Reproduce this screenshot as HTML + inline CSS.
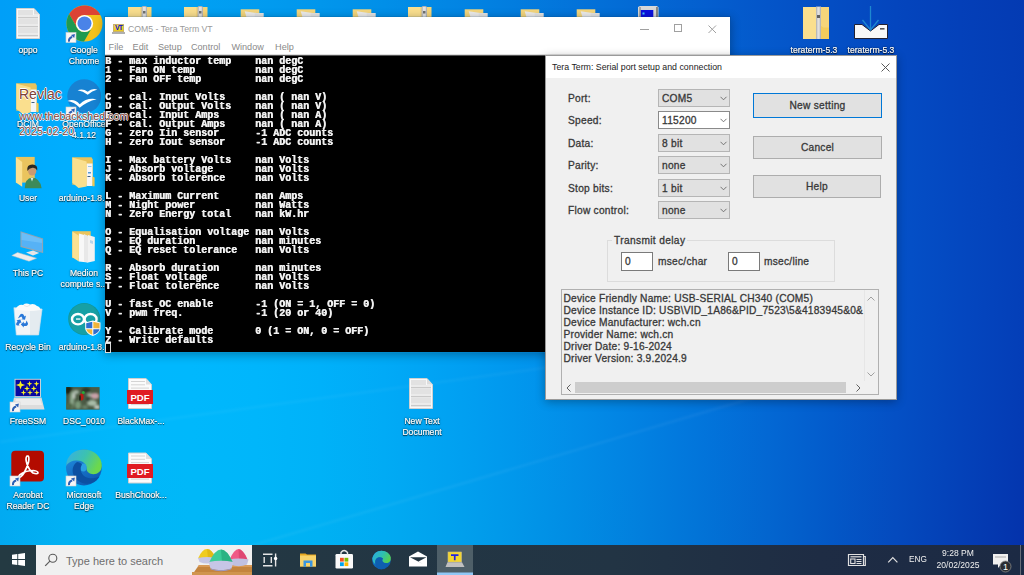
<!DOCTYPE html><html><head><meta charset="utf-8"><style>
*{margin:0;padding:0;box-sizing:border-box}
html,body{width:1024px;height:575px;overflow:hidden;background:#0290e8;font-family:"Liberation Sans",sans-serif}
.abs{position:absolute}
.bgrow{position:absolute;left:0;width:1024px}
.lbl{position:absolute;color:#fff;font-size:9.6px;line-height:11px;text-align:center;white-space:pre;transform:scaleX(.895);-webkit-text-stroke:0.2px #fff;text-shadow:0 0 2px rgba(0,0,0,.85),0 1px 1px rgba(0,0,0,.7)}
 .term{font-family:"Liberation Mono",monospace;font-weight:bold;font-size:11px;line-height:9px;transform:scaleX(.9091);transform-origin:0 0;color:#f0f0f0;white-space:pre;text-shadow:0.6px 0 0 #f0f0f0}
.dlg{font-size:10.2px;letter-spacing:.25px;color:#383838;-webkit-text-stroke:.3px #383838}
.combo{position:absolute;left:112px;width:72px;height:18px;border:1px solid #b5b5b5;background:#e1e1e1;padding-left:3px;line-height:16px}
.combo.w{background:#fff;border-color:#8a8a8a}
.chev{position:absolute;right:3px;top:5px;width:7px;height:5px}
.btn{position:absolute;left:207px;width:129px;border:1px solid #adadad;background:#e1e1e1;text-align:center}
</style></head><body>
<div class="bgrow" style="top:0px;height:10px;background:linear-gradient(to right,#009ef7 0px,#00a2f6 64px,#00a2f5 128px,#00a0f3 192px,#019cf0 256px,#0196ec 320px,#018fe8 384px,#0286e4 448px,#027ddf 512px,#0373da 576px,#0369d4 640px,#045fcf 704px,#0455c9 768px,#044dc3 832px,#0445bd 896px,#043fb8 960px,#043ab2 1024px)"></div>
<div class="bgrow" style="top:10px;height:10px;background:linear-gradient(to right,#009ff8 0px,#00a3f7 64px,#00a3f6 128px,#00a1f3 192px,#019df1 256px,#0198ed 320px,#0190e9 384px,#0288e5 448px,#027ee0 512px,#0374db 576px,#036ad5 640px,#0360cf 704px,#0456ca 768px,#044ec4 832px,#0446be 896px,#043fb8 960px,#043bb3 1024px)"></div>
<div class="bgrow" style="top:20px;height:10px;background:linear-gradient(to right,#00a0f8 0px,#00a4f8 64px,#00a4f6 128px,#00a3f4 192px,#019ff1 256px,#0199ee 320px,#0191ea 384px,#0289e6 448px,#027fe1 512px,#0375db 576px,#036bd6 640px,#0361d0 704px,#0457ca 768px,#044ec5 832px,#0446bf 896px,#0440b9 960px,#043bb3 1024px)"></div>
<div class="bgrow" style="top:30px;height:10px;background:linear-gradient(to right,#00a1f9 0px,#00a4f8 64px,#00a5f7 128px,#00a4f5 192px,#01a0f2 256px,#019aef 320px,#0193eb 384px,#028ae6 448px,#0281e2 512px,#0377dc 576px,#036cd7 640px,#0362d1 704px,#0458cb 768px,#044fc5 832px,#0447bf 896px,#0441ba 960px,#043cb4 1024px)"></div>
<div class="bgrow" style="top:40px;height:10px;background:linear-gradient(to right,#00a2f9 0px,#00a5f9 64px,#00a6f8 128px,#00a5f6 192px,#01a1f3 256px,#019bf0 320px,#0194ec 384px,#028be7 448px,#0282e2 512px,#0378dd 576px,#036dd8 640px,#0363d2 704px,#0459cc 768px,#0450c6 832px,#0448c0 896px,#0441ba 960px,#043cb4 1024px)"></div>
<div class="bgrow" style="top:50px;height:10px;background:linear-gradient(to right,#00a2fa 0px,#00a6fa 64px,#00a7f8 128px,#00a6f6 192px,#01a2f4 256px,#019cf0 320px,#0195ec 384px,#028ce8 448px,#0283e3 512px,#0379de 576px,#036ed8 640px,#0364d3 704px,#045acd 768px,#0451c7 832px,#0449c1 896px,#0442bb 960px,#043db5 1024px)"></div>
<div class="bgrow" style="top:60px;height:10px;background:linear-gradient(to right,#00a3fa 0px,#00a7fa 64px,#00a8f9 128px,#00a7f7 192px,#01a3f4 256px,#019df1 320px,#0196ed 384px,#028de9 448px,#0284e4 512px,#037adf 576px,#036fd9 640px,#0365d4 704px,#045bce 768px,#0452c8 832px,#0449c1 896px,#0442bb 960px,#043db5 1024px)"></div>
<div class="bgrow" style="top:70px;height:10px;background:linear-gradient(to right,#00a4fb 0px,#00a8fb 64px,#00a9fa 128px,#00a8f8 192px,#01a4f5 256px,#019ef2 320px,#0197ee 384px,#028eea 448px,#0285e5 512px,#027be0 576px,#0370da 640px,#0366d4 704px,#045cce 768px,#0452c8 832px,#044ac2 896px,#0443bc 960px,#043db6 1024px)"></div>
<div class="bgrow" style="top:80px;height:10px;background:linear-gradient(to right,#00a5fb 0px,#00a9fb 64px,#00aafa 128px,#00a9f8 192px,#01a5f6 256px,#019ff3 320px,#0198ef 384px,#028fea 448px,#0286e6 512px,#027ce0 576px,#0371db 640px,#0367d5 704px,#045dcf 768px,#0453c9 832px,#044bc3 896px,#0443bc 960px,#043eb6 1024px)"></div>
<div class="bgrow" style="top:90px;height:10px;background:linear-gradient(to right,#00a5fc 0px,#00aafc 64px,#00abfb 128px,#00aaf9 192px,#01a6f6 256px,#01a0f3 320px,#0199ef 384px,#0290eb 448px,#0287e6 512px,#027de1 576px,#0372db 640px,#0368d6 704px,#035dd0 768px,#0454c9 832px,#044bc3 896px,#0444bd 960px,#043eb7 1024px)"></div>
<div class="bgrow" style="top:100px;height:10px;background:linear-gradient(to right,#00a6fc 0px,#00aafc 64px,#00acfb 128px,#00aafa 192px,#00a7f7 256px,#01a1f4 320px,#019af0 384px,#0291ec 448px,#0288e7 512px,#027ee2 576px,#0373dc 640px,#0368d6 704px,#035ed0 768px,#0454ca 832px,#044cc4 896px,#0444bd 960px,#043eb7 1024px)"></div>
<div class="bgrow" style="top:110px;height:10px;background:linear-gradient(to right,#00a7fc 0px,#00abfc 64px,#00adfc 128px,#00abfa 192px,#00a8f8 256px,#01a2f5 320px,#019bf1 384px,#0292ec 448px,#0289e8 512px,#027fe2 576px,#0374dd 640px,#0369d7 704px,#035fd1 768px,#0455ca 832px,#044cc4 896px,#0445be 960px,#043fb7 1024px)"></div>
<div class="bgrow" style="top:120px;height:10px;background:linear-gradient(to right,#00a7fd 0px,#00acfd 64px,#00adfc 128px,#00acfb 192px,#00a9f8 256px,#01a3f5 320px,#019cf1 384px,#0193ed 448px,#028ae8 512px,#027fe3 576px,#0375dd 640px,#036ad7 704px,#0360d1 768px,#0456cb 832px,#044dc5 896px,#0445be 960px,#043fb8 1024px)"></div>
<div class="bgrow" style="top:130px;height:10px;background:linear-gradient(to right,#00a8fd 0px,#00acfd 64px,#00aefd 128px,#00adfb 192px,#00a9f9 256px,#01a4f6 320px,#019df2 384px,#0194ee 448px,#028be9 512px,#0280e4 576px,#0376de 640px,#036bd8 704px,#0360d2 768px,#0456cb 832px,#044dc5 896px,#0445be 960px,#043fb8 1024px)"></div>
<div class="bgrow" style="top:140px;height:10px;background:linear-gradient(to right,#00a8fd 0px,#00adfe 64px,#00affd 128px,#00aefb 192px,#00aaf9 256px,#01a5f6 320px,#019ef2 384px,#0195ee 448px,#028be9 512px,#0281e4 576px,#0376de 640px,#036bd9 704px,#0361d2 768px,#0457cc 832px,#044ec5 896px,#0446bf 960px,#043fb8 1024px)"></div>
<div class="bgrow" style="top:150px;height:10px;background:linear-gradient(to right,#00a9fd 0px,#00aefe 64px,#00affd 128px,#00aefc 192px,#00abfa 256px,#01a6f7 320px,#019ef3 384px,#0196ef 448px,#028cea 512px,#0282e5 576px,#0377df 640px,#036cd9 704px,#0362d3 768px,#0457cc 832px,#044ec6 896px,#0446bf 960px,#0440b8 1024px)"></div>
<div class="bgrow" style="top:160px;height:10px;background:linear-gradient(to right,#00a9fe 0px,#00aefe 64px,#00b0fe 128px,#00affc 192px,#00acfa 256px,#01a6f7 320px,#019ff3 384px,#0197ef 448px,#028dea 512px,#0283e5 576px,#0378e0 640px,#036dd9 704px,#0362d3 768px,#0458cd 832px,#044fc6 896px,#0446bf 960px,#0440b9 1024px)"></div>
<div class="bgrow" style="top:170px;height:10px;background:linear-gradient(to right,#00aafe 0px,#00affe 64px,#00b1fe 128px,#00b0fd 192px,#00adfa 256px,#01a7f8 320px,#01a0f4 384px,#0198f0 448px,#028eeb 512px,#0283e6 576px,#0379e0 640px,#036dda 704px,#0363d4 768px,#0458cd 832px,#044fc6 896px,#0447c0 960px,#0440b9 1024px)"></div>
<div class="bgrow" style="top:180px;height:10px;background:linear-gradient(to right,#00aafe 0px,#00affe 64px,#00b1fe 128px,#00b1fd 192px,#00adfb 256px,#01a8f8 320px,#01a1f4 384px,#0198f0 448px,#028feb 512px,#0284e6 576px,#0379e0 640px,#036eda 704px,#0363d4 768px,#0459cd 832px,#044fc7 896px,#0447c0 960px,#0440b9 1024px)"></div>
<div class="bgrow" style="top:190px;height:10px;background:linear-gradient(to right,#00abfe 0px,#00b0ff 64px,#00b2fe 128px,#00b1fd 192px,#00aefb 256px,#01a9f8 320px,#01a2f5 384px,#0199f1 448px,#028fec 512px,#0285e7 576px,#027ae1 640px,#036fdb 704px,#0364d4 768px,#0459ce 832px,#0450c7 896px,#0447c0 960px,#0440b9 1024px)"></div>
<div class="bgrow" style="top:200px;height:10px;background:linear-gradient(to right,#00abfe 0px,#00b0ff 64px,#00b2ff 128px,#00b2fd 192px,#00affb 256px,#01a9f9 320px,#01a2f5 384px,#019af1 448px,#0290ec 512px,#0285e7 576px,#027ae1 640px,#036fdb 704px,#0364d5 768px,#045ace 832px,#0450c7 896px,#0447c0 960px,#0440b9 1024px)"></div>
<div class="bgrow" style="top:210px;height:10px;background:linear-gradient(to right,#00acfe 0px,#00b1ff 64px,#00b3ff 128px,#00b2fe 192px,#00affc 256px,#01aaf9 320px,#01a3f5 384px,#019af1 448px,#0291ed 512px,#0286e7 576px,#027be2 640px,#0370db 704px,#0365d5 768px,#035ace 832px,#0450c7 896px,#0447c0 960px,#0440b9 1024px)"></div>
<div class="bgrow" style="top:220px;height:10px;background:linear-gradient(to right,#00acfe 0px,#00b1ff 64px,#00b4ff 128px,#00b3fe 192px,#00b0fc 256px,#01abf9 320px,#01a4f6 384px,#019bf2 448px,#0291ed 512px,#0287e8 576px,#027ce2 640px,#0370dc 704px,#0365d5 768px,#035ace 832px,#0450c7 896px,#0447c0 960px,#0440b9 1024px)"></div>
<div class="bgrow" style="top:230px;height:10px;background:linear-gradient(to right,#01acfe 0px,#00b2ff 64px,#00b4ff 128px,#00b3fe 192px,#00b0fc 256px,#01abfa 320px,#01a4f6 384px,#019cf2 448px,#0292ed 512px,#0287e8 576px,#027ce2 640px,#0371dc 704px,#0365d5 768px,#035bcf 832px,#0451c8 896px,#0448c0 960px,#0440b9 1024px)"></div>
<div class="bgrow" style="top:240px;height:10px;background:linear-gradient(to right,#01adfe 0px,#00b2ff 64px,#00b4ff 128px,#00b4fe 192px,#00b1fc 256px,#01acfa 320px,#01a5f6 384px,#019cf2 448px,#0292ed 512px,#0288e8 576px,#027de2 640px,#0371dc 704px,#0366d6 768px,#035bcf 832px,#0451c8 896px,#0448c0 960px,#0440b9 1024px)"></div>
<div class="bgrow" style="top:250px;height:10px;background:linear-gradient(to right,#01adfe 0px,#00b2ff 64px,#00b5ff 128px,#00b4fe 192px,#00b2fd 256px,#01acfa 320px,#01a5f7 384px,#019df2 448px,#0293ee 512px,#0288e8 576px,#027de3 640px,#0372dc 704px,#0366d6 768px,#035bcf 832px,#0451c8 896px,#0448c0 960px,#0440b9 1024px)"></div>
<div class="bgrow" style="top:260px;height:10px;background:linear-gradient(to right,#01adfe 0px,#00b3ff 64px,#00b5ff 128px,#00b5fe 192px,#00b2fd 256px,#01adfa 320px,#01a6f7 384px,#019df3 448px,#0194ee 512px,#0289e9 576px,#027ee3 640px,#0372dd 704px,#0366d6 768px,#035bcf 832px,#0451c8 896px,#0448c0 960px,#0440b9 1024px)"></div>
<div class="bgrow" style="top:270px;height:10px;background:linear-gradient(to right,#01adfe 0px,#00b3ff 64px,#00b6ff 128px,#00b5fe 192px,#00b2fd 256px,#00adfa 320px,#01a6f7 384px,#019ef3 448px,#0194ee 512px,#0289e9 576px,#027ee3 640px,#0372dd 704px,#0367d6 768px,#035ccf 832px,#0451c8 896px,#0448c0 960px,#0440b9 1024px)"></div>
<div class="bgrow" style="top:280px;height:10px;background:linear-gradient(to right,#01adfd 0px,#00b3ff 64px,#00b6ff 128px,#00b6ff 192px,#00b3fd 256px,#00aefa 320px,#01a7f7 384px,#019ef3 448px,#0195ee 512px,#028ae9 576px,#027ee3 640px,#0373dd 704px,#0367d6 768px,#035ccf 832px,#0451c8 896px,#0448c0 960px,#043fb9 1024px)"></div>
<div class="bgrow" style="top:290px;height:10px;background:linear-gradient(to right,#01aefd 0px,#00b4ff 64px,#00b6ff 128px,#00b6ff 192px,#00b3fd 256px,#00aefa 320px,#01a7f7 384px,#019ff3 448px,#0195ee 512px,#028ae9 576px,#027fe3 640px,#0373dd 704px,#0367d6 768px,#035ccf 832px,#0451c8 896px,#0448c0 960px,#043fb8 1024px)"></div>
<div class="bgrow" style="top:300px;height:10px;background:linear-gradient(to right,#01aefd 0px,#00b4ff 64px,#00b7ff 128px,#00b6fe 192px,#00b4fd 256px,#00affa 320px,#01a8f7 384px,#019ff3 448px,#0195ee 512px,#028be9 576px,#027fe3 640px,#0373dd 704px,#0367d6 768px,#035ccf 832px,#0451c8 896px,#0447c0 960px,#043fb8 1024px)"></div>
<div class="bgrow" style="top:310px;height:10px;background:linear-gradient(to right,#01aefd 0px,#00b4fe 64px,#00b7ff 128px,#00b7fe 192px,#00b4fd 256px,#00affb 320px,#01a8f7 384px,#01a0f3 448px,#0196ef 512px,#028be9 576px,#027fe3 640px,#0374dd 704px,#0368d6 768px,#035ccf 832px,#0451c7 896px,#0447c0 960px,#043fb8 1024px)"></div>
<div class="bgrow" style="top:320px;height:10px;background:linear-gradient(to right,#01aefd 0px,#00b4fe 64px,#00b7ff 128px,#00b7fe 192px,#00b4fd 256px,#00affa 320px,#01a9f7 384px,#01a0f3 448px,#0196ef 512px,#028be9 576px,#0280e3 640px,#0374dd 704px,#0368d6 768px,#035ccf 832px,#0451c7 896px,#0447c0 960px,#043eb8 1024px)"></div>
<div class="bgrow" style="top:330px;height:10px;background:linear-gradient(to right,#01aefc 0px,#01b4fe 64px,#00b7ff 128px,#00b7fe 192px,#00b5fd 256px,#00b0fa 320px,#01a9f7 384px,#01a0f3 448px,#0196ef 512px,#028ce9 576px,#0280e3 640px,#0374dd 704px,#0368d6 768px,#035ccf 832px,#0451c7 896px,#0447bf 960px,#043eb7 1024px)"></div>
<div class="bgrow" style="top:340px;height:10px;background:linear-gradient(to right,#01aefc 0px,#01b4fe 64px,#00b7fe 128px,#00b8fe 192px,#00b5fd 256px,#00b0fa 320px,#01a9f7 384px,#01a1f3 448px,#0197ef 512px,#028ce9 576px,#0280e3 640px,#0374dd 704px,#0368d6 768px,#035ccf 832px,#0451c7 896px,#0447bf 960px,#043eb7 1024px)"></div>
<div class="bgrow" style="top:350px;height:10px;background:linear-gradient(to right,#01aefb 0px,#01b4fd 64px,#00b8fe 128px,#00b8fe 192px,#00b5fd 256px,#00b0fa 320px,#01aaf7 384px,#01a1f3 448px,#0197ef 512px,#028ce9 576px,#0280e3 640px,#0374dd 704px,#0368d6 768px,#035cce 832px,#0451c7 896px,#0446bf 960px,#043db7 1024px)"></div>
<div class="bgrow" style="top:360px;height:10px;background:linear-gradient(to right,#01aefb 0px,#01b4fd 64px,#00b8fe 128px,#00b8fe 192px,#00b5fc 256px,#00b1fa 320px,#01aaf7 384px,#01a1f3 448px,#0197ee 512px,#028ce9 576px,#0281e3 640px,#0274dd 704px,#0368d6 768px,#035cce 832px,#0451c6 896px,#0446be 960px,#043db6 1024px)"></div>
<div class="bgrow" style="top:370px;height:10px;background:linear-gradient(to right,#01aefb 0px,#01b4fd 64px,#00b8fe 128px,#00b8fd 192px,#00b6fc 256px,#00b1fa 320px,#01aaf7 384px,#01a1f3 448px,#0198ee 512px,#028ce9 576px,#0281e3 640px,#0274dc 704px,#0368d5 768px,#035cce 832px,#0451c6 896px,#0446be 960px,#043db6 1024px)"></div>
<div class="bgrow" style="top:380px;height:10px;background:linear-gradient(to right,#01aefa 0px,#01b4fc 64px,#00b8fd 128px,#00b8fd 192px,#00b6fc 256px,#00b1fa 320px,#01aaf7 384px,#01a2f3 448px,#0198ee 512px,#028de9 576px,#0281e3 640px,#0275dc 704px,#0368d5 768px,#035cce 832px,#0450c6 896px,#0446be 960px,#043cb5 1024px)"></div>
<div class="bgrow" style="top:390px;height:10px;background:linear-gradient(to right,#01aefa 0px,#01b4fc 64px,#00b8fd 128px,#00b8fd 192px,#00b6fc 256px,#00b1fa 320px,#01aaf7 384px,#01a2f3 448px,#0198ee 512px,#028de9 576px,#0281e3 640px,#0275dc 704px,#0368d5 768px,#035ccd 832px,#0450c5 896px,#0445bd 960px,#043cb5 1024px)"></div>
<div class="bgrow" style="top:400px;height:10px;background:linear-gradient(to right,#01adf9 0px,#01b4fb 64px,#00b8fd 128px,#00b8fd 192px,#00b6fb 256px,#00b1f9 320px,#01abf6 384px,#01a2f2 448px,#0198ee 512px,#028de8 576px,#0281e2 640px,#0275dc 704px,#0368d5 768px,#035ccd 832px,#0450c5 896px,#0445bd 960px,#043bb4 1024px)"></div>
<div class="bgrow" style="top:410px;height:10px;background:linear-gradient(to right,#01adf9 0px,#01b4fb 64px,#00b8fc 128px,#00b8fc 192px,#00b6fb 256px,#00b2f9 320px,#01abf6 384px,#01a2f2 448px,#0198ee 512px,#028de8 576px,#0281e2 640px,#0275dc 704px,#0368d4 768px,#035ccd 832px,#0450c5 896px,#0444bc 960px,#043bb4 1024px)"></div>
<div class="bgrow" style="top:420px;height:10px;background:linear-gradient(to right,#01adf8 0px,#01b4fa 64px,#00b8fc 128px,#00b8fc 192px,#00b6fb 256px,#00b2f9 320px,#01abf6 384px,#01a2f2 448px,#0198ed 512px,#028de8 576px,#0281e2 640px,#0275db 704px,#0368d4 768px,#035bcc 832px,#044fc4 896px,#0444bc 960px,#043ab3 1024px)"></div>
<div class="bgrow" style="top:430px;height:10px;background:linear-gradient(to right,#01adf7 0px,#01b4fa 64px,#01b8fb 128px,#00b8fb 192px,#00b6fa 256px,#00b2f8 320px,#01abf6 384px,#01a2f2 448px,#0198ed 512px,#028de8 576px,#0281e2 640px,#0274db 704px,#0368d4 768px,#035bcc 832px,#044fc4 896px,#0444bb 960px,#0439b3 1024px)"></div>
<div class="bgrow" style="top:440px;height:10px;background:linear-gradient(to right,#01adf7 0px,#01b4f9 64px,#01b8fb 128px,#00b8fb 192px,#00b6fa 256px,#00b2f8 320px,#01abf5 384px,#01a2f1 448px,#0198ed 512px,#028de7 576px,#0281e1 640px,#0274db 704px,#0368d3 768px,#035bcb 832px,#044fc3 896px,#0443bb 960px,#0439b2 1024px)"></div>
<div class="bgrow" style="top:450px;height:10px;background:linear-gradient(to right,#01acf6 0px,#01b4f9 64px,#01b8fa 128px,#00b8fa 192px,#00b6fa 256px,#00b2f8 320px,#01abf5 384px,#01a2f1 448px,#0198ec 512px,#028de7 576px,#0281e1 640px,#0274da 704px,#0367d3 768px,#035bcb 832px,#044ec3 896px,#0443ba 960px,#0438b1 1024px)"></div>
<div class="bgrow" style="top:460px;height:10px;background:linear-gradient(to right,#01acf5 0px,#01b3f8 64px,#01b7fa 128px,#00b8fa 192px,#00b6f9 256px,#00b2f7 320px,#01abf4 384px,#01a2f1 448px,#0198ec 512px,#028de7 576px,#0281e0 640px,#0274da 704px,#0367d2 768px,#035acb 832px,#044ec2 896px,#0442ba 960px,#0437b1 1024px)"></div>
<div class="bgrow" style="top:470px;height:10px;background:linear-gradient(to right,#01acf5 0px,#01b3f7 64px,#01b7f9 128px,#00b8f9 192px,#00b6f9 256px,#00b2f7 320px,#01abf4 384px,#01a2f0 448px,#0198ec 512px,#028de6 576px,#0281e0 640px,#0274d9 704px,#0367d2 768px,#035aca 832px,#044dc2 896px,#0442b9 960px,#0437b0 1024px)"></div>
<div class="bgrow" style="top:480px;height:10px;background:linear-gradient(to right,#02abf4 0px,#01b3f7 64px,#01b7f8 128px,#00b8f9 192px,#00b6f8 256px,#00b2f6 320px,#01abf4 384px,#01a2f0 448px,#0198eb 512px,#028de6 576px,#0281e0 640px,#0274d9 704px,#0367d1 768px,#035ac9 832px,#044dc1 896px,#0441b8 960px,#0436af 1024px)"></div>
<div class="bgrow" style="top:490px;height:10px;background:linear-gradient(to right,#02abf3 0px,#01b3f6 64px,#01b7f8 128px,#00b8f8 192px,#00b6f8 256px,#00b1f6 320px,#01abf3 384px,#01a2ef 448px,#0198eb 512px,#018de5 576px,#0280df 640px,#0273d8 704px,#0366d1 768px,#0359c9 832px,#044cc0 896px,#0440b8 960px,#0435ae 1024px)"></div>
<div class="bgrow" style="top:500px;height:10px;background:linear-gradient(to right,#02aaf2 0px,#01b2f5 64px,#01b7f7 128px,#00b8f8 192px,#00b6f7 256px,#00b1f5 320px,#01abf3 384px,#01a2ef 448px,#0198ea 512px,#018de5 576px,#0280df 640px,#0273d8 704px,#0366d0 768px,#0359c8 832px,#044cc0 896px,#0440b7 960px,#0435ae 1024px)"></div>
<div class="bgrow" style="top:510px;height:10px;background:linear-gradient(to right,#02aaf1 0px,#01b2f5 64px,#01b6f6 128px,#00b7f7 192px,#00b6f6 256px,#00b1f5 320px,#01abf2 384px,#01a2ee 448px,#0198ea 512px,#018ce4 576px,#0280de 640px,#0273d7 704px,#0366d0 768px,#0358c8 832px,#044bbf 896px,#043fb6 960px,#0434ad 1024px)"></div>
<div class="bgrow" style="top:520px;height:10px;background:linear-gradient(to right,#02a9f1 0px,#01b1f4 64px,#01b6f6 128px,#00b7f6 192px,#00b5f6 256px,#00b1f4 320px,#01aaf1 384px,#01a2ee 448px,#0198e9 512px,#018ce4 576px,#0280dd 640px,#0273d7 704px,#0365cf 768px,#0358c7 832px,#044bbe 896px,#043eb5 960px,#0433ac 1024px)"></div>
<div class="bgrow" style="top:530px;height:10px;background:linear-gradient(to right,#02a9f0 0px,#01b1f3 64px,#01b6f5 128px,#01b7f6 192px,#00b5f5 256px,#00b1f3 320px,#01aaf1 384px,#01a2ed 448px,#0197e9 512px,#018ce3 576px,#027fdd 640px,#0272d6 704px,#0365ce 768px,#0357c6 832px,#044abe 896px,#043eb4 960px,#0432ab 1024px)"></div>
<div class="bgrow" style="top:540px;height:10px;background:linear-gradient(to right,#02a8ef 0px,#01b1f2 64px,#01b5f4 128px,#01b7f5 192px,#00b5f4 256px,#00b1f3 320px,#01aaf0 384px,#01a1ed 448px,#0197e8 512px,#018ce2 576px,#027fdc 640px,#0272d5 704px,#0364ce 768px,#0357c5 832px,#0449bd 896px,#043db4 960px,#0431aa 1024px)"></div>
<div class="bgrow" style="top:550px;height:10px;background:linear-gradient(to right,#02a8ee 0px,#01b0f1 64px,#01b5f3 128px,#01b6f4 192px,#00b5f4 256px,#00b0f2 320px,#01aaf0 384px,#01a1ec 448px,#0197e7 512px,#018be2 576px,#027fdc 640px,#0271d5 704px,#0364cd 768px,#0356c5 832px,#0449bc 896px,#043cb3 960px,#0430a9 1024px)"></div>
<div class="bgrow" style="top:560px;height:10px;background:linear-gradient(to right,#02a7ed 0px,#01b0f0 64px,#01b4f2 128px,#01b6f3 192px,#00b4f3 256px,#00b0f1 320px,#01a9ef 384px,#01a1eb 448px,#0197e7 512px,#018be1 576px,#027edb 640px,#0271d4 704px,#0363cc 768px,#0356c4 832px,#0448bb 896px,#043bb2 960px,#042fa8 1024px)"></div>
<div class="bgrow" style="top:570px;height:10px;background:linear-gradient(to right,#02a7ec 0px,#01afef 64px,#01b4f2 128px,#01b5f2 192px,#00b4f2 256px,#00b0f1 320px,#01a9ee 384px,#01a1ea 448px,#0196e6 512px,#018be0 576px,#027eda 640px,#0271d3 704px,#0363cb 768px,#0355c3 832px,#0447ba 896px,#043ab1 960px,#052ea7 1024px)"></div>
<svg class="abs" style="left:0;top:0" width="1024" height="575"><defs><filter id="sb" x="-5%" y="-50%" width="110%" height="200%"><feGaussianBlur stdDeviation="1"/></filter></defs><g filter="url(#sb)"><path d="M230 552L800 384" stroke="#fff" stroke-opacity=".05" stroke-width="2.5"/><path d="M0 442L720 344" stroke="#fff" stroke-opacity=".04" stroke-width="2.5"/></g></svg>
<svg class="abs" style="left:0;top:0" width="1024" height="545"><g transform="translate(16,8)"><path d="M0.5 0.5H18L23.5 6.5V30.5H0.5Z" fill="#f8f8f8" stroke="#d0d0d0" stroke-width="1"/><rect x="2" y="2" width="15" height="5" fill="#e2e2e2"/><rect x="2" y="7.6" width="20" height="0.8" fill="#d6d6d6"/><rect x="2" y="9.2" width="20" height="1.1" fill="#bdbdbd"/><rect x="2" y="11" width="20" height="5" fill="#e2e2e2"/><rect x="2" y="16.6" width="20" height="0.8" fill="#d6d6d6"/><rect x="2" y="18.2" width="20" height="1.1" fill="#bdbdbd"/><rect x="2" y="20" width="20" height="5" fill="#e2e2e2"/><rect x="2" y="25.6" width="20" height="0.8" fill="#d6d6d6"/><rect x="2" y="27.2" width="20" height="1.1" fill="#bdbdbd"/><path d="M18 0.5V6.5H23.5Z" fill="#dcdcdc"/></g><circle cx="84.5" cy="23.5" r="18" fill="#f3c21b"/><path d="M77.05 27.80 L69.15 14.11 A18 18 0 0 1 100.31 14.90 L84.50 14.90 A8.6 8.6 0 0 0 77.05 27.80Z" fill="#dc4335"/><path d="M91.95 27.80 L84.04 41.49 A18 18 0 0 1 69.15 14.11 L77.05 27.80 A8.6 8.6 0 0 0 91.95 27.80Z" fill="#1f9a50"/><circle cx="84.5" cy="23.5" r="8.6" fill="#fff"/><circle cx="84.5" cy="23.5" r="7" fill="#4a83e8"/><g transform="translate(66,32.5)"><rect x="0" y="0" width="10" height="10" fill="#f6f6f6" stroke="#d0d0d0" stroke-width="0.6"/><path d="M3 9.2Q2.6 5.4 6.2 4.6" fill="none" stroke="#2d5fb4" stroke-width="2"/><path d="M5 2.4L8.9 1.6L8.2 5.6Z" fill="#2d5fb4"/></g><g transform="translate(10,79)"><path d="M6.3 4.3H25.5L26.8 6.5V31.8H6.3Z" fill="#e9c25c"/><rect x="20.5" y="10.5" width="6" height="22.5" fill="#f6f6f6"/><rect x="22" y="13" width="3.5" height="1" fill="#9cc4e4"/><rect x="22" y="19" width="3" height="1.5" fill="#5a9ad4"/><rect x="21.5" y="23" width="3" height="1" fill="#406080"/><path d="M26.5 23.5L28.6 24.6V33.2H26.5Z" fill="#f0c64e"/><path d="M6.3 4.6L20.6 8.6V33.6L12.6 35L6.3 29.8Z" fill="#fadf8e"/></g><circle cx="84.2" cy="96.2" r="16.9" fill="#1782d2"/><path d="M77.6 90.3Q83 88.3 87.7 91.8Q92 87.8 97.4 89.6Q92 90.8 87.7 94.8Q83 91 77.6 90.3Z" fill="#fff"/><path d="M67.5 101Q74 98.2 79.7 104.2Q87 97.2 96.7 99.3Q87 101.5 79.7 107.8Q74 101.8 67.5 101Z" fill="#fff"/><g transform="translate(66,107)"><rect x="0" y="0" width="10" height="10" fill="#f6f6f6" stroke="#d0d0d0" stroke-width="0.6"/><path d="M3 9.2Q2.6 5.4 6.2 4.6" fill="none" stroke="#2d5fb4" stroke-width="2"/><path d="M5 2.4L8.9 1.6L8.2 5.6Z" fill="#2d5fb4"/></g><path d="M15.9 156.9H34.7V182.6H15.9Z" fill="#eac45e"/><path d="M15.9 157.2L22.2 162.1V186.7L15.9 182.6Z" fill="#fbe192"/><path d="M24.8 188.3Q25 178.5 32 177.6Q40 178 41.6 188.3Z" fill="#3d8a58"/><path d="M30.5 177.8L32 181.5L33.5 177.8Z" fill="#dfe8e0"/><ellipse cx="32.2" cy="171" rx="4.1" ry="4.6" fill="#c99a72"/><path d="M27.3 171Q26.5 164.5 32.5 164.6Q38 164.8 37.2 170.5Q36 167.5 32.5 167.8Q29 168 27.3 171Z" fill="#2b2822"/><g transform="translate(66,153)"><path d="M6.3 4.3H25.5L26.8 6.5V31.8H6.3Z" fill="#e9c25c"/><rect x="20.5" y="10.5" width="6" height="22.5" fill="#f6f6f6"/><rect x="22" y="13" width="3.5" height="1" fill="#9cc4e4"/><rect x="22" y="19" width="3" height="1.5" fill="#5a9ad4"/><rect x="21.5" y="23" width="3" height="1" fill="#406080"/><path d="M26.5 23.5L28.6 24.6V33.2H26.5Z" fill="#f0c64e"/><path d="M6.3 4.6L20.6 8.6V33.6L12.6 35L6.3 29.8Z" fill="#fadf8e"/></g><path d="M20.5 231.2L43.1 238.5V253.1L20.5 246.9Z" fill="#98a4ae"/><path d="M21.5 232.6L42.1 239.3V251.8L21.5 246Z" fill="#56b2f6"/><path d="M21.5 232.6L42.1 239.3V243L21.5 240Z" fill="#7cc6fa" opacity=".6"/><path d="M26 252.5L33 250.5L39.3 253L33 255.5Z" fill="#e6e6e6"/><path d="M11.8 255.6L17.5 252.5L36.5 258.3L29 261.2Z" fill="#ececec" stroke="#c4c4c4" stroke-width="0.5"/><path d="M72.3 231.2H90.7V258H72.3Z" fill="#eac45e"/><path d="M78.9 233.6L88 236V262.5L78.9 261.4Z" fill="#f8f8f8"/><path d="M88 235L94.8 237V261L88 262.5Z" fill="#f2f2f2"/><path d="M84 234L88 236V262.5L84 261.5Z" fill="#e8e8e8"/><path d="M90 240L93 241V244L90 243Z" fill="#b8d4ea"/><path d="M72.3 231.6L78.9 235.7V261.4L72.3 257.3Z" fill="#fbe192"/><path d="M13.9 307.7L42.1 309L38.6 335H16.3Z" fill="#f2f5f8"/><path d="M30 311L41.5 309.5L38.6 335H30Z" fill="#e4ebf0"/><path d="M13.9 307.7L42.1 309L38.6 335H16.3Z" fill="none" stroke="#c4dcec" stroke-width="0.7"/><path d="M15.5 309.5Q18 304 23 305Q26 302.5 30 304.5Q34 303 37 306Q40 306.5 40.5 310Q28 312 15.5 309.5Z" fill="#fafafa"/><path d="M24 305.5Q27 308 30 305" fill="none" stroke="#d8d8d8" stroke-width=".6"/><g fill="#2a78d8"><path d="M17.8 318.6L20.2 314.6Q21.6 313.2 23.2 314.2L24.6 316.4L26 315.6L25 319.8L21.2 319.2L22.6 318.4L21.4 316.6Z"/><path d="M26.6 320.6L28 323.6Q28.2 325.6 26.4 325.9H23.8V327.4L20.8 324.4L23.8 321.6V323.2H25.6Z"/><path d="M19.6 325.6H17.4Q15.6 325.4 16.2 323.4L17.6 321L16.4 320.2L20.4 319.6L21.6 323.4L20.2 322.6L18.8 324.6Z"/></g><circle cx="84.2" cy="318.9" r="16" fill="#11979c"/><circle cx="84.2" cy="318.9" r="15.2" fill="#16a0a5"/><g fill="none" stroke="#fff" stroke-width="2.4"><ellipse cx="78" cy="319.2" rx="6" ry="5.2"/><ellipse cx="90.6" cy="319.2" rx="6" ry="5.2"/></g><rect x="76" y="318.4" width="4.5" height="1.3" fill="#fff"/><path d="M85.2 322.5L92.8 320.6L100.5 322.5V329Q99 334 92.8 336Q86.5 334 85.2 329Z" fill="#fff"/><path d="M86.2 323.2L92.3 321.7V328.2H86.2Z" fill="#2f6fd0"/><path d="M93.3 321.7L99.5 323.2V328.2H93.3Z" fill="#f4b73a"/><path d="M86.2 329.2H92.3V334.8Q87.5 333 86.2 329.2Z" fill="#f4b73a"/><path d="M93.3 329.2H99.5Q98.5 333 93.3 334.8Z" fill="#2f6fd0"/><rect x="14.5" y="378.8" width="26.5" height="18.3" fill="#c8d0d8"/><rect x="15.5" y="379.8" width="24.5" height="16.3" fill="#0808a0"/><path d="M20.5 380.4L21.65 383.85L25.1 385L21.65 386.15L20.5 389.6L19.35 386.15L15.9 385L19.35 383.85Z" fill="#f8f020"/><path d="M29.5 380.90000000000003L30.225 383.075L32.4 383.8L30.225 384.52500000000003L29.5 386.7L28.775 384.52500000000003L26.6 383.8L28.775 383.075Z" fill="#f8f020"/><path d="M36.5 380.90000000000003L37.225 383.075L39.4 383.8L37.225 384.52500000000003L36.5 386.7L35.775 384.52500000000003L33.6 383.8L35.775 383.075Z" fill="#f8f020"/><path d="M27 385.6L27.725 387.775L29.9 388.5L27.725 389.225L27 391.4L26.275 389.225L24.1 388.5L26.275 387.775Z" fill="#f8f020"/><path d="M33.8 385.6L34.525 387.775L36.699999999999996 388.5L34.525 389.225L33.8 391.4L33.074999999999996 389.225L30.9 388.5L33.074999999999996 387.775Z" fill="#f8f020"/><path d="M23.5 389.70000000000005L24.225 391.875L26.4 392.6L24.225 393.32500000000005L23.5 395.5L22.775 393.32500000000005L20.6 392.6L22.775 391.875Z" fill="#f8f020"/><path d="M30 389.70000000000005L30.725 391.875L32.9 392.6L30.725 393.32500000000005L30 395.5L29.275 393.32500000000005L27.1 392.6L29.275 391.875Z" fill="#f8f020"/><path d="M36.8 389.70000000000005L37.525 391.875L39.699999999999996 392.6L37.525 393.32500000000005L36.8 395.5L36.074999999999996 393.32500000000005L33.9 392.6L36.074999999999996 391.875Z" fill="#f8f020"/><path d="M14 397.5H41.5L44.5 409.5H11.5Z" fill="#dcdcdc"/><path d="M16 399H40L42 405H14Z" fill="#ececec"/><g transform="translate(10,402)"><rect x="0" y="0" width="10" height="10" fill="#f6f6f6" stroke="#d0d0d0" stroke-width="0.6"/><path d="M3 9.2Q2.6 5.4 6.2 4.6" fill="none" stroke="#2d5fb4" stroke-width="2"/><path d="M5 2.4L8.9 1.6L8.2 5.6Z" fill="#2d5fb4"/></g><defs><filter id="blr" x="-10%" y="-10%" width="120%" height="120%"><feGaussianBlur stdDeviation="0.8"/></filter><clipPath id="phc"><rect x="66.2" y="387.1" width="33.4" height="22.5"/></clipPath></defs><rect x="66.2" y="387.1" width="33.4" height="22.5" fill="#4a5a44"/><g clip-path="url(#phc)"><g filter="url(#blr)"><ellipse cx="68" cy="390" rx="4" ry="4" fill="#1c2818"/><ellipse cx="72" cy="400" rx="2.2" ry="9" fill="#8aa488"/><ellipse cx="76" cy="392" rx="3" ry="2" fill="#a0b0a0"/><ellipse cx="69" cy="406" rx="4" ry="3" fill="#506848"/><ellipse cx="78" cy="405" rx="3" ry="4" fill="#7a9878"/><ellipse cx="86" cy="390" rx="4" ry="2.5" fill="#2a3826"/><ellipse cx="90" cy="395" rx="3" ry="2" fill="#9aa898"/><ellipse cx="95" cy="396" rx="4" ry="3" fill="#c8a0a8"/><ellipse cx="92" cy="403" rx="5" ry="3" fill="#a8bca8"/><ellipse cx="97" cy="407" rx="3" ry="2" fill="#c0c8c0"/><ellipse cx="85" cy="407" rx="3" ry="2" fill="#6a8068"/><ellipse cx="88" cy="399" rx="2" ry="3" fill="#38483a"/><ellipse cx="74" cy="396" rx="1.5" ry="3" fill="#c0c8c0"/></g></g><ellipse cx="81.6" cy="397" rx="2" ry="3.4" fill="#b81c14"/><ellipse cx="83.3" cy="392.5" rx="1.5" ry="1.5" fill="#2aa838"/><ellipse cx="80" cy="398" rx="0.9" ry="3" fill="#1a281a"/><g transform="translate(128,378)"><path d="M0.5 0.5H18L23.5 6.5V30.5H0.5Z" fill="#fbfbfb" stroke="#cfcfcf" stroke-width="1"/><path d="M18 0.5V6.5H23.5Z" fill="#e0e0e0"/><rect x="3" y="3.0" width="14" height="1" fill="#d4d4d4"/><rect x="3" y="6.3" width="14" height="1" fill="#d4d4d4"/><rect x="3" y="9.6" width="18" height="1" fill="#d4d4d4"/><rect x="3" y="12.9" width="18" height="1" fill="#d4d4d4"/><rect x="3" y="16.2" width="18" height="1" fill="#d4d4d4"/><rect x="3" y="19.5" width="18" height="1" fill="#d4d4d4"/><rect x="3" y="22.8" width="18" height="1" fill="#d4d4d4"/><rect x="3" y="26.1" width="18" height="1" fill="#d4d4d4"/><rect x="-1" y="12" width="26" height="14" fill="#e01b22"/><text x="12.0" y="22.5" text-anchor="middle" font-family="Liberation Sans" font-weight="bold" font-size="9.6" fill="#fff">PDF</text></g><g transform="translate(409,378)"><path d="M0.5 0.5H18L23.5 6.5V30.5H0.5Z" fill="#f8f8f8" stroke="#d0d0d0" stroke-width="1"/><rect x="2" y="2" width="15" height="5" fill="#e2e2e2"/><rect x="2" y="7.6" width="20" height="0.8" fill="#d6d6d6"/><rect x="2" y="9.2" width="20" height="1.1" fill="#bdbdbd"/><rect x="2" y="11" width="20" height="5" fill="#e2e2e2"/><rect x="2" y="16.6" width="20" height="0.8" fill="#d6d6d6"/><rect x="2" y="18.2" width="20" height="1.1" fill="#bdbdbd"/><rect x="2" y="20" width="20" height="5" fill="#e2e2e2"/><rect x="2" y="25.6" width="20" height="0.8" fill="#d6d6d6"/><rect x="2" y="27.2" width="20" height="1.1" fill="#bdbdbd"/><path d="M18 0.5V6.5H23.5Z" fill="#dcdcdc"/></g><rect x="11.3" y="450.8" width="32.7" height="30.7" rx="4" fill="#b30b00"/><path d="M27 456Q25 458 27 464Q29 470 33 473Q37 474.5 38 473Q38 471 33.5 470.5Q26 470.5 21 474Q18 476 19.5 477Q21 477.5 24 473Q27 468 28.5 462Q29.5 457 28 456Z" fill="none" stroke="#fff" stroke-width="1.7"/><g transform="translate(10,476)"><rect x="0" y="0" width="10" height="10" fill="#f6f6f6" stroke="#d0d0d0" stroke-width="0.6"/><path d="M3 9.2Q2.6 5.4 6.2 4.6" fill="none" stroke="#2d5fb4" stroke-width="2"/><path d="M5 2.4L8.9 1.6L8.2 5.6Z" fill="#2d5fb4"/></g><defs><linearGradient id="eg1" x1="0" y1="0" x2="1" y2="0.4"><stop offset="0" stop-color="#38aee8"/><stop offset=".55" stop-color="#3cc2b0"/><stop offset="1" stop-color="#6cd84c"/></linearGradient><linearGradient id="eg2" x1="0" y1="0" x2="0.5" y2="1"><stop offset="0" stop-color="#2294e4"/><stop offset="1" stop-color="#0f5cb4"/></linearGradient></defs><circle cx="83.9" cy="467.5" r="17.9" fill="url(#eg2)"/><path d="M66.1 466C66.5 455 75 449.6 84 449.6C94 449.6 101.8 457 101.8 465.5C101.8 471.5 97.5 474.2 93.5 474.2C89.5 474.2 86.5 471.8 86.5 468.5C86.5 464 82.5 460.5 77 460.5C72 460.5 68 462.5 66.1 466Z" fill="url(#eg1)"/><ellipse cx="83.4" cy="467.5" rx="3.2" ry="4" fill="#2a9ee2"/><path d="M77 462C72.5 465 71.5 471 74 476C77 482 86 486 93 482.5C96 481 98.5 478.5 99.5 476.5C96 478 90 479.5 85.5 477C80.5 474 79.5 468 82 464.5C81 463 79 462 77 462Z" fill="#0c50a2"/><g transform="translate(66,476)"><rect x="0" y="0" width="10" height="10" fill="#f6f6f6" stroke="#d0d0d0" stroke-width="0.6"/><path d="M3 9.2Q2.6 5.4 6.2 4.6" fill="none" stroke="#2d5fb4" stroke-width="2"/><path d="M5 2.4L8.9 1.6L8.2 5.6Z" fill="#2d5fb4"/></g><g transform="translate(128,452.5)"><path d="M0.5 0.5H18L23.5 6.5V30.5H0.5Z" fill="#fbfbfb" stroke="#cfcfcf" stroke-width="1"/><path d="M18 0.5V6.5H23.5Z" fill="#e0e0e0"/><rect x="3" y="3.0" width="14" height="1" fill="#d4d4d4"/><rect x="3" y="6.3" width="14" height="1" fill="#d4d4d4"/><rect x="3" y="9.6" width="18" height="1" fill="#d4d4d4"/><rect x="3" y="12.9" width="18" height="1" fill="#d4d4d4"/><rect x="3" y="16.2" width="18" height="1" fill="#d4d4d4"/><rect x="3" y="19.5" width="18" height="1" fill="#d4d4d4"/><rect x="3" y="22.8" width="18" height="1" fill="#d4d4d4"/><rect x="3" y="26.1" width="18" height="1" fill="#d4d4d4"/><rect x="-1" y="11.5" width="26" height="14" fill="#e01b22"/><text x="12.0" y="22.0" text-anchor="middle" font-family="Liberation Sans" font-weight="bold" font-size="9.6" fill="#fff">PDF</text></g><g transform="translate(803,7)"><rect x="0" y="0" width="26" height="32" fill="#f6d57a"/><rect x="0" y="0" width="13" height="32" fill="#fadf8e"/><rect x="13" y="-0.5" width="5" height="32.5" fill="#b8b8b8"/><rect x="14.3" y="0" width="2.4" height="32" fill="#e0e0e0"/><rect x="14" y="8" width="3" height="3" fill="#606060"/><path d="M18 19L20.5 20.5L26 20.5V32H18Z" fill="#f3cc5c"/></g><path d="M854.5 24.5H862L870.5 31L879 24.5H887.5V38.5H854.5Z" fill="#f8f8f8" stroke="#223" stroke-width="1"/><rect x="880" y="28" width="4.5" height="1.6" fill="#555"/><path d="M870.5 6V30.5M862.5 20L870.5 30L878.5 20" fill="none" stroke="#1e88d0" stroke-width="1.3"/><rect x="128" y="7" width="23.5" height="11" fill="#f6d57a"/><rect x="128" y="7" width="12" height="11" fill="#fadf8e"/><rect x="141.5" y="6" width="5.5" height="12" rx="1.5" fill="#b4b4b4"/><rect x="142.7" y="7" width="3.1" height="11" fill="#e2e2e2"/><rect x="143" y="11" width="2.5" height="2.5" fill="#707070"/><rect x="184" y="7" width="23.5" height="11" fill="#f6d57a"/><rect x="184" y="7" width="12" height="11" fill="#fadf8e"/><rect x="197.5" y="6" width="5.5" height="12" rx="1.5" fill="#b4b4b4"/><rect x="198.7" y="7" width="3.1" height="11" fill="#e2e2e2"/><rect x="199" y="11" width="2.5" height="2.5" fill="#707070"/><rect x="408" y="7" width="23.5" height="11" fill="#f6d57a"/><rect x="408" y="7" width="12" height="11" fill="#fadf8e"/><rect x="421.5" y="6" width="5.5" height="12" rx="1.5" fill="#b4b4b4"/><rect x="422.7" y="7" width="3.1" height="11" fill="#e2e2e2"/><rect x="423" y="11" width="2.5" height="2.5" fill="#707070"/><rect x="240.7" y="9.3" width="18.6" height="9" fill="#f4d67c"/><path d="M244.7 11.2L256.7 13V18H246.7Z" fill="#ececec"/><path d="M254.7 13H263.7 V18H254.7Z" fill="#e4e4e4"/><rect x="296.7" y="9.3" width="18.6" height="9" fill="#f4d67c"/><path d="M300.7 11.2L312.7 13V18H302.7Z" fill="#ececec"/><path d="M310.7 13H319.7 V18H310.7Z" fill="#e4e4e4"/><rect x="352.7" y="9.3" width="18.6" height="9" fill="#f4d67c"/><path d="M356.7 11.2L368.7 13V18H358.7Z" fill="#ececec"/><path d="M366.7 13H375.7 V18H366.7Z" fill="#e4e4e4"/><rect x="464.7" y="9.3" width="18.6" height="9" fill="#f4d67c"/><path d="M468.7 11.2L480.7 13V18H470.7Z" fill="#ececec"/><path d="M478.7 13H487.7 V18H478.7Z" fill="#e4e4e4"/><rect x="520.7" y="9.3" width="18.6" height="9" fill="#f4d67c"/><path d="M524.7 11.2L536.7 13V18H526.7Z" fill="#ececec"/><path d="M534.7 13H543.7 V18H534.7Z" fill="#e4e4e4"/><rect x="576.7" y="9.3" width="18.6" height="9" fill="#f4d67c"/><path d="M580.7 11.2L592.7 13V18H582.7Z" fill="#ececec"/><path d="M590.7 13H599.7 V18H590.7Z" fill="#e4e4e4"/><path d="M638 7L640 6H657L658.5 7.5V18H638Z" fill="#d8d8d8"/><rect x="639" y="7" width="2" height="11" fill="#a8a8a8"/><rect x="656" y="7" width="2" height="11" fill="#888"/><rect x="640.8" y="10" width="12.5" height="8" fill="#0a10e0"/><rect x="642.5" y="12.5" width="2" height="2" fill="#40c8ff"/></svg><div class="lbl" style="left:-11.8px;top:44.3px;width:80px">oppo</div>
<div class="lbl" style="left:43.5px;top:44.3px;width:80px">Google
Chrome</div>
<div class="lbl" style="left:-12.0px;top:118.4px;width:80px">DCIM</div>
<div class="lbl" style="left:44.0px;top:118.4px;width:80px">OpenOffice
4.1.12</div>
<div class="lbl" style="left:-12.0px;top:192.4px;width:80px">User</div>
<div class="lbl" style="left:44.0px;top:192.4px;width:80px">arduino-1.8.1</div>
<div class="lbl" style="left:-12.0px;top:266.5px;width:80px">This PC</div>
<div class="lbl" style="left:44.0px;top:266.5px;width:80px">Medion
compute s...</div>
<div class="lbl" style="left:-12.0px;top:340.6px;width:80px">Recycle Bin</div>
<div class="lbl" style="left:44.0px;top:340.6px;width:80px">arduino-1.8.1</div>
<div class="lbl" style="left:-12.0px;top:414.6px;width:80px">FreeSSM</div>
<div class="lbl" style="left:44.0px;top:414.6px;width:80px">DSC_0010</div>
<div class="lbl" style="left:101.0px;top:414.6px;width:80px">BlackMax-...</div>
<div class="lbl" style="left:381.5px;top:414.6px;width:80px">New Text
Document</div>
<div class="lbl" style="left:-12.0px;top:488.7px;width:80px">Acrobat
Reader DC</div>
<div class="lbl" style="left:44.0px;top:488.7px;width:80px">Microsoft
Edge</div>
<div class="lbl" style="left:101.0px;top:488.7px;width:80px">BushChook...</div>
<div class="lbl" style="left:774.3px;top:44.3px;width:80px">teraterm-5.3</div>
<div class="lbl" style="left:830.9px;top:44.3px;width:80px">teraterm-5.3</div>

<div class="abs" style="left:104px;top:16px;width:627px;height:337px;background:rgba(0,30,60,.22);box-shadow:0 2px 9px rgba(0,0,0,.3)"></div>
<div class="abs" style="left:105px;top:17px;width:625px;height:335px;background:#000;overflow:hidden">
  <div class="abs" style="left:0;top:0;width:625px;height:37px;background:#fff"></div>
  <div class="abs" style="left:0;top:37px;width:625px;height:1px;background:#ddd"></div>
  <div class="abs" style="left:0;top:38px;width:625px;height:1px;background:#555"></div>
  <!-- VT icon -->
  <div class="abs" style="left:8px;top:7px;width:11px;height:8px;background:linear-gradient(#f8e040,#e8c820);border:1px solid #c9b26a"></div>
  <div class="abs" style="left:10px;top:6px;font:bold 7px/9px 'Liberation Sans';color:#1010d0;letter-spacing:-1px">VT</div>
  <div class="abs" style="left:7px;top:15px;width:13px;height:2px;background:#b0b0b0"></div>
  <div class="abs" style="left:23px;top:6.5px;font-size:8.7px;line-height:11px;color:#9a9a9a;white-space:pre">COM5 - Tera Term VT</div>
  <div class="abs" style="left:3.6px;top:25px;font-size:9.15px;line-height:11px;color:#8a8a8a;white-space:pre">File</div>
  <div class="abs" style="left:27.6px;top:25px;font-size:9.15px;line-height:11px;color:#8a8a8a;white-space:pre">Edit</div>
  <div class="abs" style="left:52.9px;top:25px;font-size:9.15px;line-height:11px;color:#8a8a8a;white-space:pre">Setup</div>
  <div class="abs" style="left:85.9px;top:25px;font-size:9.15px;line-height:11px;color:#8a8a8a;white-space:pre">Control</div>
  <div class="abs" style="left:126.4px;top:25px;font-size:9.15px;line-height:11px;color:#8a8a8a;white-space:pre">Window</div>
  <div class="abs" style="left:170.1px;top:25px;font-size:9.15px;line-height:11px;color:#8a8a8a;white-space:pre">Help</div>
  <!-- caption buttons -->
  <div class="abs" style="left:535px;top:12px;width:9px;height:1px;background:#a0a0a0"></div>
  <div class="abs" style="left:569px;top:7px;width:8px;height:8px;border:1px solid #a0a0a0"></div>
  <svg class="abs" style="left:603px;top:7.5px" width="9" height="9"><path d="M0.5 0.5L8 8M8 0.5L0.5 8" stroke="#a0a0a0" stroke-width="1"/></svg>
  <div class="abs term" style="left:-0.5px;top:40px">B - max inductor temp    nan degC
1 - Fan ON temp          nan degC
2 - Fan OFF temp         nan degC

C - cal. Input Volts     nan ( nan V)
D - cal. Output Volts    nan ( nan V)
E - cal. Input Amps      nan ( nan A)
F - cal. Output Amps     nan ( nan A)
G - zero Iin sensor      -1 ADC counts
H - zero Iout sensor     -1 ADC counts

I - Max battery Volts    nan Volts
J - Absorb voltage       nan Volts
K - Absorb tolerence     nan Volts

L - Maximum Current      nan Amps
M - Night power          nan Watts
N - Zero Energy total    nan kW.hr

O - Equalisation voltage nan Volts
P - EQ duration          nan minutes
Q - EQ reset tolerance   nan Volts

R - Absorb duration      nan minutes
S - Float voltage        nan Volts
T - Float tolerence      nan Volts

U - fast OC enable       -1 (ON = 1, OFF = 0)
V - pwm freq.            -1 (20 or 40)

Y - Calibrate mode       0 (1 = ON, 0 = OFF)
Z - Write defaults</div>
</div>
<div class="abs" style="left:105px;top:343px;width:6.3px;height:10px;border:1.6px solid #dcdcdc"></div>
<div class="abs" style="left:545px;top:55px;width:352px;height:345px;box-shadow:0 2px 9px rgba(0,0,0,.3);background:#9a9a9a"></div>
<div class="abs dlg" style="left:546px;top:56px;width:350px;height:343px;background:#f0f0f0;overflow:hidden">
<div class="abs" style="left:0;top:0;width:350px;height:22px;background:#fff"></div>
<div class="abs" style="left:6px;top:6px;font-size:8.8px;letter-spacing:0;-webkit-text-stroke:0;line-height:11px;color:#222;white-space:pre">Tera Term: Serial port setup and connection</div>
<svg class="abs" style="left:335px;top:7px" width="9" height="9"><path d="M0.5 0.5L8.5 8.5M8.5 0.5L0.5 8.5" stroke="#505050" stroke-width=".95"/></svg>
<div class="abs" style="left:22px;top:37.0px;line-height:11px;white-space:pre">Port:</div>
<div class="combo" style="top:33.0px"><span style="position:relative;top:1px">COM5</span><svg class="abs" style="left:61px;top:6px" width="8" height="5"><path d="M0.5 0.8L3.5 3.8L6.5 0.8" fill="none" stroke="#666" stroke-width="0.9"/></svg></div>
<div class="abs" style="left:22px;top:59.4px;line-height:11px;white-space:pre">Speed:</div>
<div class="combo w" style="top:55.4px"><span style="position:relative;top:1px">115200</span><svg class="abs" style="left:61px;top:6px" width="8" height="5"><path d="M0.5 0.8L3.5 3.8L6.5 0.8" fill="none" stroke="#666" stroke-width="0.9"/></svg></div>
<div class="abs" style="left:22px;top:81.8px;line-height:11px;white-space:pre">Data:</div>
<div class="combo" style="top:77.8px"><span style="position:relative;top:1px">8 bit</span><svg class="abs" style="left:61px;top:6px" width="8" height="5"><path d="M0.5 0.8L3.5 3.8L6.5 0.8" fill="none" stroke="#666" stroke-width="0.9"/></svg></div>
<div class="abs" style="left:22px;top:104.2px;line-height:11px;white-space:pre">Parity:</div>
<div class="combo" style="top:100.2px"><span style="position:relative;top:1px">none</span><svg class="abs" style="left:61px;top:6px" width="8" height="5"><path d="M0.5 0.8L3.5 3.8L6.5 0.8" fill="none" stroke="#666" stroke-width="0.9"/></svg></div>
<div class="abs" style="left:22px;top:126.6px;line-height:11px;white-space:pre">Stop bits:</div>
<div class="combo" style="top:122.6px"><span style="position:relative;top:1px">1 bit</span><svg class="abs" style="left:61px;top:6px" width="8" height="5"><path d="M0.5 0.8L3.5 3.8L6.5 0.8" fill="none" stroke="#666" stroke-width="0.9"/></svg></div>
<div class="abs" style="left:22px;top:149.0px;line-height:11px;white-space:pre">Flow control:</div>
<div class="combo" style="top:145.0px"><span style="position:relative;top:1px">none</span><svg class="abs" style="left:61px;top:6px" width="8" height="5"><path d="M0.5 0.8L3.5 3.8L6.5 0.8" fill="none" stroke="#666" stroke-width="0.9"/></svg></div>
<div class="btn" style="top:37px;height:25px;line-height:23px;border-color:#0078d7;width:129px">New setting</div>
<div class="btn" style="top:80px;height:23px;line-height:21px;border-color:#adadad;width:129px">Cancel</div>
<div class="btn" style="top:119px;height:23px;line-height:21px;border-color:#adadad;width:128px">Help</div>
<div class="abs" style="left:61px;top:184px;width:228px;height:42px;border:1px solid #dcdcdc"></div>
<div class="abs" style="left:66px;top:179px;padding:0 2px;background:#f0f0f0;line-height:11px;font-size:10.2px;letter-spacing:.35px">Transmit delay</div>
<div class="abs" style="left:75px;top:196px;width:32px;height:19px;border:1px solid #7a7a7a;background:#fff;padding-left:3px;line-height:17px">0</div>
<div class="abs" style="left:112px;top:200px;line-height:11px">msec/char</div>
<div class="abs" style="left:182px;top:196px;width:32px;height:19px;border:1px solid #7a7a7a;background:#fff;padding-left:3px;line-height:17px">0</div>
<div class="abs" style="left:218px;top:200px;line-height:11px">msec/line</div>
<div class="abs" style="left:15px;top:233px;width:318px;height:106px;border:1px solid #b0b0b0;background:#f0f0f0;overflow:hidden">
<div class="abs" style="left:1.5px;top:3px;line-height:12px;white-space:pre;font-size:10.2px;letter-spacing:.22px;color:#383838">Device Friendly Name: USB-SERIAL CH340 (COM5)</div>
<div class="abs" style="left:1.5px;top:15px;line-height:12px;white-space:pre;font-size:10.2px;letter-spacing:.22px;color:#383838">Device Instance ID: USB\VID_1A86&amp;PID_7523\5&amp;4183945&amp;0&amp;</div>
<div class="abs" style="left:1.5px;top:27px;line-height:12px;white-space:pre;font-size:10.2px;letter-spacing:.22px;color:#383838">Device Manufacturer: wch.cn</div>
<div class="abs" style="left:1.5px;top:39px;line-height:12px;white-space:pre;font-size:10.2px;letter-spacing:.22px;color:#383838">Provider Name: wch.cn</div>
<div class="abs" style="left:1.5px;top:51px;line-height:12px;white-space:pre;font-size:10.2px;letter-spacing:.22px;color:#383838">Driver Date: 9-16-2024</div>
<div class="abs" style="left:1.5px;top:63px;line-height:12px;white-space:pre;font-size:10.2px;letter-spacing:.22px;color:#383838">Driver Version: 3.9.2024.9</div>
<div class="abs" style="left:302px;top:0;width:15px;height:91px;background:#f0f0f0;border-left:1px solid #e6e6e6"></div>
<svg class="abs" style="left:305px;top:6px" width="8" height="5"><path d="M0.5 4.5L4 1L7.5 4.5" fill="none" stroke="#a0a0a0"/></svg>
<svg class="abs" style="left:305px;top:82px" width="8" height="5"><path d="M0.5 0.5L4 4L7.5 0.5" fill="none" stroke="#a0a0a0"/></svg>
<div class="abs" style="left:0;top:91px;width:302px;height:13px;background:#f0f0f0"></div>
<div class="abs" style="left:13px;top:92px;width:271px;height:11px;background:#cdcdcd"></div>
<svg class="abs" style="left:4px;top:94px" width="5" height="8"><path d="M4.5 0.5L1 4L4.5 7.5" fill="none" stroke="#606060"/></svg>
<svg class="abs" style="left:294px;top:94px" width="5" height="8"><path d="M0.5 0.5L4 4L0.5 7.5" fill="none" stroke="#606060"/></svg>
</div>
</div>
<div class="abs" style="left:0;top:545px;width:1024px;height:30px;background:linear-gradient(to right,#243a42,#223444 60%,#1e2c44 80%,#1c2a44)"></div>
<svg class="abs" style="left:12px;top:553px" width="13" height="13"><path d="M0 1.8L5.3 1.1V6.1H0Z M6.2 1L13 0V6.1H6.2Z M0 6.9H5.3V11.9L0 11.2Z M6.2 6.9H13V13L6.2 12Z" fill="#fff"/></svg>
<div class="abs" style="left:36px;top:545px;width:216px;height:30px;background:#f0f0f0"></div>
<svg class="abs" style="left:44px;top:553px" width="14" height="14"><circle cx="8.8" cy="5.2" r="4" fill="none" stroke="#5a5a5a" stroke-width="1.1"/><path d="M5.9 8.1L1.2 12.8" stroke="#5a5a5a" stroke-width="1.2"/></svg>
<div class="abs" style="left:66px;top:555px;font-size:11px;line-height:13px;color:#6e6e6e;white-space:pre">Type here to search</div>
<svg class="abs" style="left:0;top:545px" width="1024" height="30"><g fill="none" stroke="#e6e6e6" stroke-width="1.4"><path d="M263 9.3H272.5M263 20.7H272.5M264.2 12V18M271.3 12V18M275.6 8.5V21.5"/></g><circle cx="275.6" cy="13.5" r="1.7" fill="#fff"/><path d="M300 8.5H305.5L307 9.5H316V21.5H300Z" fill="#e8a820"/><rect x="300" y="10.5" width="16" height="11" fill="#f8d36a"/><path d="M303.5 21.8V15.5H312.5V21.8H310V18H306V21.8Z" fill="#3a96e0"/><rect x="335.5" y="9" width="17.5" height="14.5" rx="1.2" fill="#fafafa"/><path d="M341 9.5V7.5Q344 3.5 347.5 7.5V9.5" fill="none" stroke="#e6e6e6" stroke-width="1.4"/><rect x="340" y="12.8" width="3.8" height="3.8" fill="#f25022"/><rect x="344.5" y="12.8" width="3.8" height="3.8" fill="#7fba00"/><rect x="340" y="17.3" width="3.8" height="3.8" fill="#00a4ef"/><rect x="344.5" y="17.3" width="3.8" height="3.8" fill="#ffb900"/><defs><linearGradient id="teg1" x1="0" y1="0" x2="1" y2="0.5"><stop offset="0" stop-color="#2aa8e8"/><stop offset=".55" stop-color="#2ec0b0"/><stop offset="1" stop-color="#56d050"/></linearGradient><linearGradient id="teg2" x1="0" y1="0" x2="0.4" y2="1"><stop offset="0" stop-color="#1a8ae0"/><stop offset="1" stop-color="#0a5cb0"/></linearGradient></defs><circle cx="381.5" cy="15" r="9.3" fill="url(#teg2)"/><path d="M372.3 13.5Q374 6 381.5 5.8Q389 6 390.8 12.5Q391 17 387.5 18Q384 18.5 382.5 16.5Q381.5 14.5 383 13.5Q379.5 11 376.5 13.5Q374.5 15.5 375.5 19.5Q372.5 17 372.3 13.5Z" fill="url(#teg1)"/><path d="M376.5 13.5Q379.5 11 383 13.5Q381.5 15 382.8 17Q384.5 19 389 18.5Q386.5 23.5 381.5 24.3Q376.5 24.3 375.5 19.5Q374.5 15.5 376.5 13.5Z" fill="#0e5eb0"/><path d="M409 11.5L418 6.5L427 11.5V21.5H409Z" fill="#fff"/><path d="M410 12.2H426.5L418.5 16.5L423 19Z" fill="#233440"/><rect x="437" y="0" width="36" height="30" fill="#4e5f68"/><rect x="437" y="27.5" width="36" height="2.5" fill="#90c8f6"/><rect x="448" y="7" width="13.5" height="10" fill="#f2d530"/><rect x="448" y="7" width="13.5" height="10" fill="none" stroke="#d0c080" stroke-width="0.6"/><path d="M451 9.3H458.5V11H455.6V15.2H453.9V11H451Z" fill="#2222e0"/><path d="M447.5 17.3H462L464.5 22H445.5Z" fill="#c0c0c0"/><g fill="none" stroke="#e0e0e0" stroke-width="1.2"><path d="M848.5 9.5H863.5V20.5H848.5Z"/><path d="M863.5 11.5H865.3V20.5H863.5"/></g><rect x="850.5" y="11.2" width="11" height="1.2" fill="#e0e0e0"/><rect x="850.7" y="14" width="4.3" height="4.5" fill="none" stroke="#e0e0e0" stroke-width="1.1"/><rect x="856.5" y="14" width="5" height="1" fill="#ddd"/><rect x="856.5" y="16" width="5" height="1" fill="#ddd"/><rect x="856.5" y="18" width="5" height="1" fill="#ddd"/><path d="M888.2 17.3L892.8 12.6L897.4 17.3" fill="none" stroke="#e0e0e0" stroke-width="1.2"/><path d="M993 9H1008V19.5H1001L998 23V19.5H993Z" fill="#f0f0f0"/><rect x="995" y="11.5" width="11" height="1" fill="#aaa"/><circle cx="1005.5" cy="21.5" r="5.5" fill="#2a2e33" stroke="#888" stroke-width="0.8"/><text x="1005.5" y="25" text-anchor="middle" font-family="Liberation Sans" font-size="9" fill="#fff">1</text><rect x="1020" y="0" width="1" height="30" fill="#666c78"/></svg><div class="abs" style="left:905px;top:553px;width:26px;text-align:center;font-size:9.8px;line-height:12px;color:#f0f0f0;transform:scaleX(.84)">ENG</div><div class="abs" style="left:930px;top:546.5px;width:56px;text-align:center;font-size:9.5px;line-height:12.5px;color:#f0f0f0;white-space:pre;transform:scaleX(.9)">9:28 PM
20/02/2025</div><svg class="abs" style="left:190px;top:545px" width="62" height="30"><path d="M2 30L9 20H62V30Z" fill="#c4843e"/><path d="M9 20H62V22H7.6Z" fill="#d89a58"/><rect x="2" y="27" width="60" height="3" fill="#d0944e"/><path d="M8 13.5Q12 4 17 4Q22 4 26 13.5Z" fill="#f0cc20"/><path d="M17 4Q22 4 26 13.5H18Z" fill="#d8ae10" opacity=".6"/><path d="M8 13Q17 11 26 13L24.5 17Q17 20 9.5 17Z" fill="#c6c6e4"/><path d="M39.7 14.5Q44 4 48.6 4Q53 4 57.5 14.5Z" fill="#f05a86"/><path d="M48.6 4Q53 4 57.5 14.5H49Z" fill="#d43a66" opacity=".6"/><path d="M39 14.5Q48.6 12.5 58.5 14.5L57 19.5Q48.6 23 40.5 19.5Z" fill="#c0c0e0"/><path d="M19.4 17Q25 4.5 31 4.5Q37 4.5 42.6 17Z" fill="#3ccc98"/><path d="M31 4.5Q37 4.5 42.6 17H32Z" fill="#22a274" opacity=".6"/><path d="M18.5 17Q31 14.5 43.5 17L41.5 23.5Q31 27 20.5 23.5Z" fill="#c6c6e6"/><path d="M20.5 23.5Q31 27 41.5 23.5L41 24.5Q31 28 21 24.5Z" fill="#9a9ac8"/></svg><div style="position:absolute;font-family:'Liberation Sans';color:#7e4236;white-space:pre;text-shadow:0.6px 0 0.3px #fff,-0.6px 0 0.3px #fff,0 0.6px 0.3px #fff,0 -0.6px 0.3px #fff;left:19px;top:86px;font-size:14px;line-height:16px">Revlac</div><div style="position:absolute;font-family:'Liberation Sans';color:#7e4236;white-space:pre;text-shadow:0.6px 0 0.3px #fff,-0.6px 0 0.3px #fff,0 0.6px 0.3px #fff,0 -0.6px 0.3px #fff;left:19px;top:109.5px;font-size:10.7px;line-height:13px">www.thebackshed.com</div><div style="position:absolute;font-family:'Liberation Sans';color:#7e4236;white-space:pre;text-shadow:0.6px 0 0.3px #fff,-0.6px 0 0.3px #fff,0 0.6px 0.3px #fff,0 -0.6px 0.3px #fff;left:19px;top:124.5px;font-size:10.8px;line-height:13px">2025-02-20</div></body></html>
